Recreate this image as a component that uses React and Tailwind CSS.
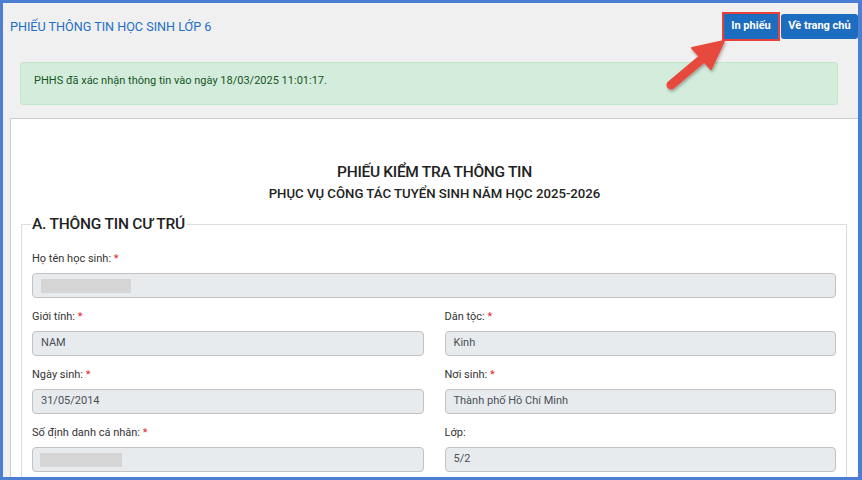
import React from 'react';

const Field = ({ label, required, value, redact }) => (
  <div className="mt-[12px]">
    <div className="text-[11px] leading-[14px] text-[#333]">
      {label} {required && <span className="text-[#e3262b]">*</span>}
    </div>
    <div className="mt-[7px] h-[25px] rounded-[4px] border border-[#c2c2c2] bg-[#e8ebee] pl-[8px] flex items-center text-[11px] text-[#495057]">
      {redact ? <div className={`h-[14px] bg-[#d5d5d5] ${redact}`}></div> : value}
    </div>
  </div>
);

export default function App() {
  return (
    <div className="relative h-[480px] w-[862px] overflow-hidden border-t-[3px] border-l-[3px] border-r-[4px] border-b-[3px] border-[#4b7ed2] bg-[#f0f0f0] font-['Roboto',sans-serif]">
      {/* Header */}
      <div className="mt-[11px] flex h-[25px] items-center justify-between">
        <h1 className="pl-[7px] pt-[1px] text-[12.6px] text-[#1f6fc8]">PHIẾU THÔNG TIN HỌC SINH LỚP 6</h1>
        <div className="flex gap-[3px]">
          <button className="h-[25px] w-[54px] bg-[#1c6cc0] text-[11px] font-bold text-white outline-[2px] outline-[#e8413a]">
            In phiếu
          </button>
          <button className="h-[25px] w-[77px] rounded-[3px] bg-[#1c6cc0] text-[11px] font-bold text-white">
            Về trang chủ
          </button>
        </div>
      </div>

      {/* Alert */}
      <div className="ml-[17px] mt-[23px] h-[43px] w-[818px] rounded-[3px] border border-[#c3e6cb] bg-[#d4ecdb] px-[13px] pt-[10px] text-[11px] leading-[16px] text-[#155724]">
        PHHS đã xác nhận thông tin vào ngày 18/03/2025 11:01:17.
      </div>

      {/* Card */}
      <div className="ml-[7px] mt-[13px] w-[849px] border border-[#cccccc] bg-white px-[10px] pt-[43px] pb-[20px]">
        <div className="text-center text-[15.5px] leading-[20px] font-medium tracking-[-0.3px] text-[#222]">PHIẾU KIỂM TRA THÔNG TIN</div>
        <div className="mt-[4px] text-center text-[13.2px] leading-[16px] font-medium text-[#222]">
          PHỤC VỤ CÔNG TÁC TUYỂN SINH NĂM HỌC 2025-2026
        </div>

        <div className="mt-[12px] w-[826px]">
          {/* legend row */}
          <div className="flex h-[20px]">
            <div className="h-[10px] w-[10px] self-end border-t border-l border-[#dddddd]"></div>
            <span className="px-[1px] text-[15.5px] leading-[20px] font-medium tracking-[-0.2px] text-[#222]">
              A. THÔNG TIN CƯ TRÚ
            </span>
            <div className="h-[10px] flex-1 self-end border-t border-r border-[#dddddd]"></div>
          </div>
          <div className="border-x border-b border-[#dddddd] px-[10px] pt-[6px] pb-[20px]">
            <Field label="Họ tên học sinh:" required redact="w-[90px]" />
            <div className="grid grid-cols-2 gap-x-[21px]">
              <Field label="Giới tính:" required value="NAM" />
              <Field label="Dân tộc:" required value="Kinh" />
              <Field label="Ngày sinh:" required value="31/05/2014" />
              <Field label="Nơi sinh:" required value="Thành phố Hồ Chí Minh" />
              <Field label="Số định danh cá nhân:" required redact="w-[82px] -ml-[1px]" />
              <Field label="Lớp:" value="5/2" />
            </div>
          </div>
        </div>
      </div>

      {/* Arrow annotation */}
      <svg className="absolute left-[-3px] top-[-3px] pointer-events-none" width="862" height="480" viewBox="0 0 862 480">
        <defs>
          <filter id="sh" x="-20%" y="-20%" width="140%" height="140%">
            <feDropShadow dx="1" dy="2" stdDeviation="1.5" floodColor="#000" floodOpacity="0.3" />
          </filter>
        </defs>
        <g filter="url(#sh)" fill="#e8483e" stroke="#e8483e">
          <line x1="671" y1="85" x2="702" y2="59" strokeWidth="9" strokeLinecap="round" />
          <polygon points="692,48 724,41 711,69" strokeWidth="2" strokeLinejoin="round" />
        </g>
      </svg>
    </div>
  );
}
